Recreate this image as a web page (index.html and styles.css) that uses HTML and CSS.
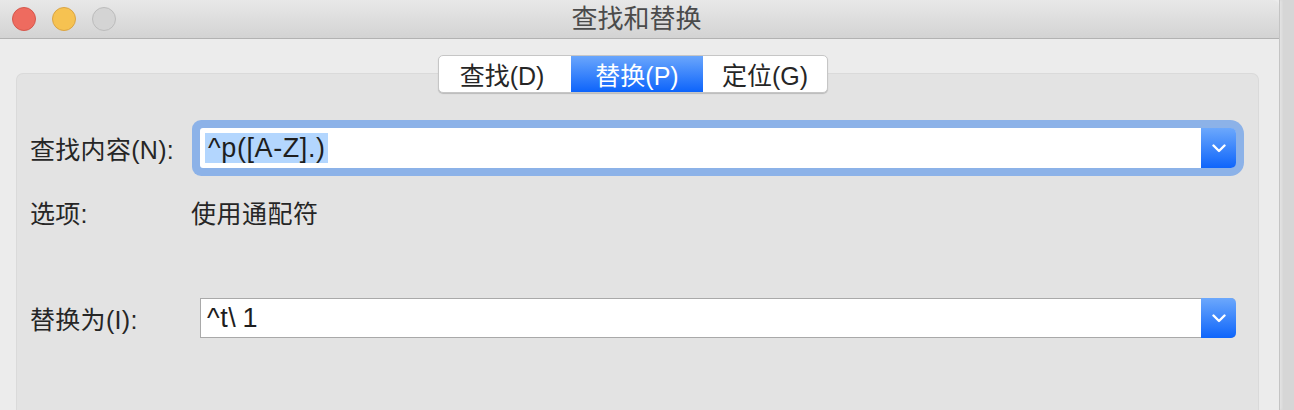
FILE: index.html
```html
<!DOCTYPE html>
<html lang="zh-CN">
<head>
  <meta charset="UTF-8">
  <title>查找和替换</title>
  <link rel="stylesheet" href="styles.css">
</head>
<body>
  <div class="window">
    <div class="titlebar">
      <div class="lights">
        <span class="light close"></span>
        <span class="light minimize"></span>
        <span class="light zoom"></span>
      </div>
      <div class="title">查找和替换</div>
    </div>

    <div class="content">
      <div class="tabs">
        <span class="tab tab-find">查找(D)</span>
        <span class="tab tab-replace active">替换(P)</span>
        <span class="tab tab-goto">定位(G)</span>
      </div>

      <div class="group">
        <div class="row row-find">
          <label class="label">查找内容(N):</label>
          <div class="field focused">
            <span class="field-text"><span class="selected">^p([A-Z].)</span></span>
            <span class="drop-btn">
              <svg width="14" height="9" viewBox="0 0 14 9"><path d="M1.5 1.5 L7 7 L12.5 1.5" fill="none" stroke="#fff" stroke-width="2.4" stroke-linecap="round" stroke-linejoin="round"/></svg>
            </span>
          </div>
        </div>

        <div class="row row-options">
          <span class="label">选项:</span>
          <span class="value">使用通配符</span>
        </div>

        <div class="row row-replace">
          <label class="label">替换为(I):</label>
          <div class="field">
            <span class="field-text">^t\&#8201;1</span>
            <span class="drop-btn">
              <svg width="14" height="9" viewBox="0 0 14 9"><path d="M1.5 1.5 L7 7 L12.5 1.5" fill="none" stroke="#fff" stroke-width="2.4" stroke-linecap="round" stroke-linejoin="round"/></svg>
            </span>
          </div>
        </div>
      </div>
    </div>
  </div>
</body>
</html>
```

FILE: styles.css
```css
html, body {
  margin: 0; padding: 0;
  height: 100%; overflow: hidden;
  background: #d6d6d6;
  font-family: "Liberation Sans", "Noto Sans CJK SC", sans-serif;
  color: #262626;
}
.window {
  width: 1280px;
  height: 100%;
  background: #ececec;
  border-right: 1px solid #c4c4c4;
  box-shadow: 2px 0 2px #e2e2e2;
  box-sizing: border-box;
  display: flex;
  flex-direction: column;
}
.titlebar {
  height: 38px;
  flex: none;
  border-bottom: 1px solid #b2b2b2;
  border-top-right-radius: 6px;
  background: linear-gradient(#e8e8e8, #d3d3d3);
  display: flex;
  align-items: center;
  position: relative;
}
.lights {
  display: flex;
  gap: 16px;
  padding-left: 12px;
}
.light {
  width: 24px; height: 24px;
  border-radius: 50%;
  box-sizing: border-box;
}
.light.close { background: #ee6b5f; border: 1px solid #d5574c; }
.light.minimize { background: #f6c251; border: 1px solid #daa444; }
.light.zoom { background: #d4d4d4; border: 1px solid #bcbcbc; }
.title {
  position: absolute;
  left: 0; right: 0;
  text-align: center;
  font-size: 26px;
  line-height: 38px;
  color: #4b4b4b;
  padding-right: 6px;
}
.content {
  flex: 1;
  padding: 16px 20px 0 16px;
  display: flex;
  flex-direction: column;
}
.tabs {
  position: relative;
  z-index: 1;
  display: flex;
  align-self: flex-start;
  margin-left: 422px;
  height: 38px;
  background: #fff;
  border: 1px solid #c6c6c6;
  border-radius: 5px;
  box-shadow: 0 1px 1px rgba(0,0,0,0.18);
  box-sizing: border-box;
  overflow: hidden;
}
.tab {
  display: flex;
  align-items: center;
  justify-content: center;
  font-size: 25px;
  color: #262626;
  box-sizing: border-box;
}
.tab-find { width: 132px; padding-right: 6px; }
.tab-replace { width: 132px; }
.tab-goto { width: 124px; }
.tab.active {
  color: #fff;
  background: linear-gradient(#6aa6fc, #0d64fb);
}
.group {
  flex: 1;
  margin-top: -20px;
  background: #e3e3e3;
  border: 1px solid #dadada;
  border-bottom: none;
  border-radius: 7px 7px 0 0;
  padding: 54px 22px 0 13px;
}
.row {
  display: flex;
  align-items: center;
}
.label {
  width: 161px;
  flex: none;
  font-size: 25px;
  letter-spacing: 0.3px;
  color: #262626;
}
.value {
  font-size: 25px;
  letter-spacing: 0.5px;
  color: #262626;
}
.row-options {
  height: 30px;
  margin-top: 29px;
}
.row-replace {
  margin-top: 71px;
}
.field {
  flex: 1;
  margin-left: 9px;
  height: 40px;
  background: #fff;
  border: 1px solid #a9a9a9;
  border-right: none;
  box-sizing: border-box;
  display: flex;
  align-items: center;
  border-radius: 0 5px 5px 0;
}
.field.focused {
  border: none;
  border-radius: 3px 6px 6px 3px;
  box-shadow: 0 0 0 8px #8cb2e8;
}
.field-text {
  flex: 1;
  font-size: 27px;
  line-height: 34px;
  padding-left: 6px;
  letter-spacing: 0.6px;
  color: #1e1e1e;
}
.focused .field-text { padding-left: 5px; }
.selected {
  background: #b3d6fe;
  padding: 0 2px 0 3px;
}
.drop-btn {
  width: 35px;
  align-self: stretch;
  margin: -1px 0;
  flex: none;
  display: flex;
  align-items: center;
  justify-content: center;
  background: linear-gradient(#6ca8fc, #0e65fb);
  border-radius: 0 5px 5px 0;
}
.focused .drop-btn { margin: 0; }
```
